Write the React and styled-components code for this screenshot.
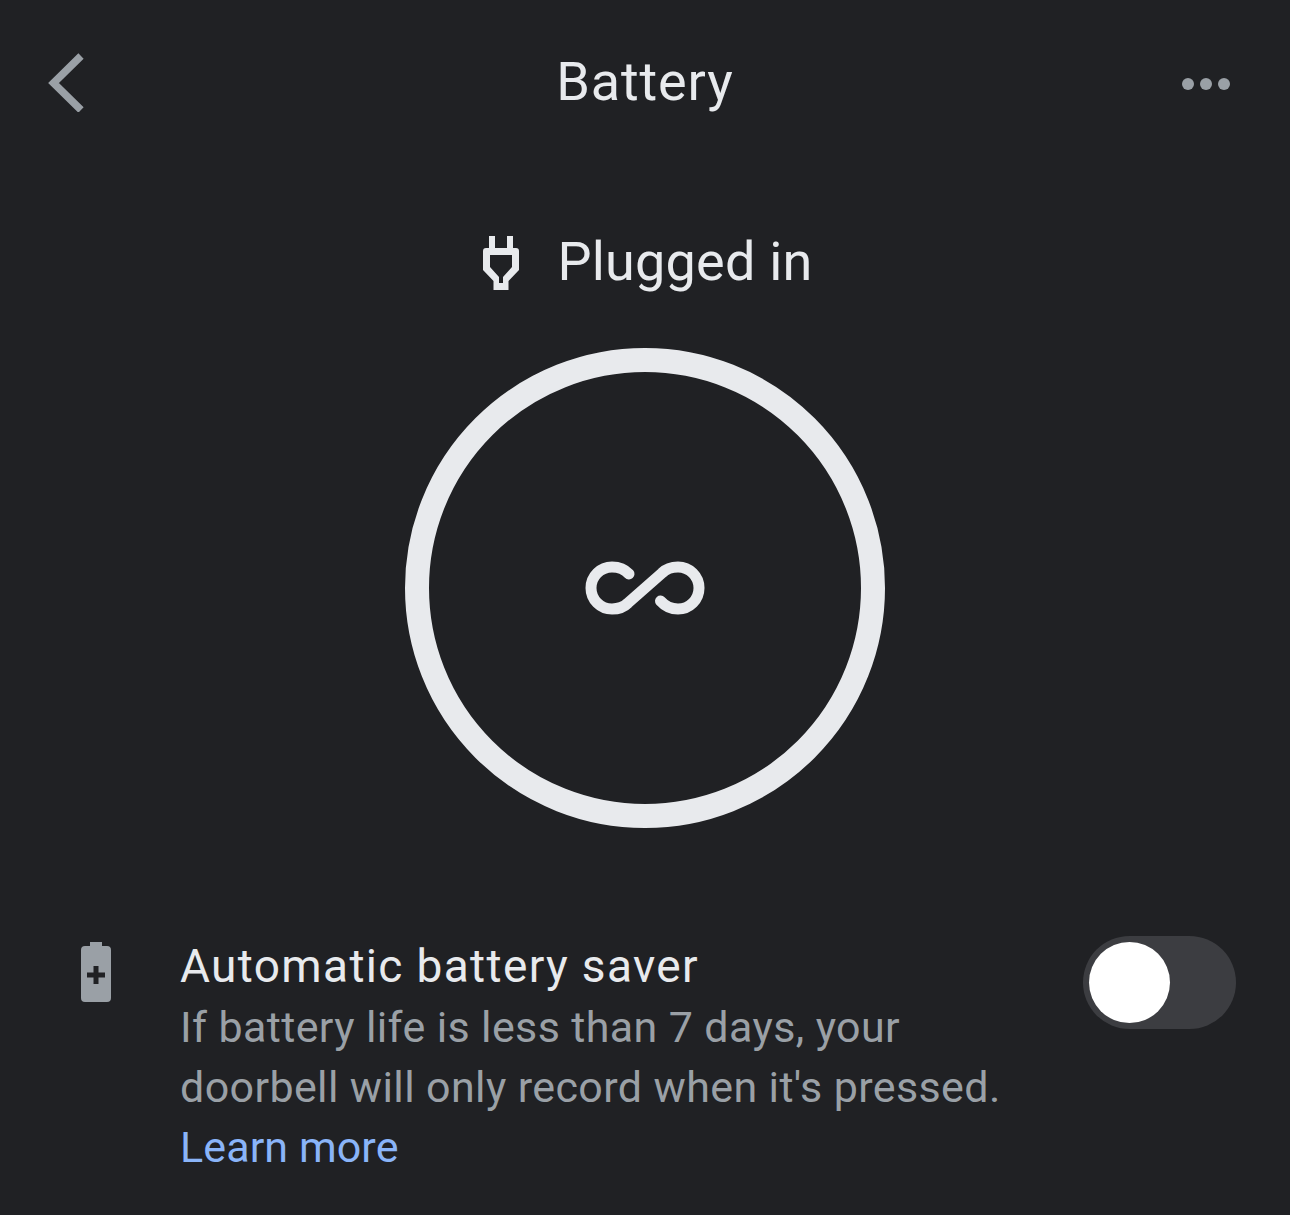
import React from 'react'
import styled, { createGlobalStyle } from 'styled-components'

const Global = createGlobalStyle`
  html, body { margin: 0; padding: 0; background: #202124; }
`
const Page = styled.div`
  width: 1290px;
  height: 1215px;
  overflow: hidden;
  background: #202124;
  color: #e8eaed;
  font-family: Roboto, "Open Sans", sans-serif;
  display: flex;
  flex-direction: column;
`
const Header = styled.header`
  height: 164px;
  display: grid;
  grid-template-columns: 1fr auto 1fr;
  align-items: center;
  padding: 0 48px;
`
const BackButton = styled.div`
  display: flex;
  justify-content: flex-start;
`
const MoreButton = styled.div`
  display: flex;
  justify-content: flex-end;
  gap: 6px;
  margin: 4px 12px 0 0;
`
const Dot = styled.span`
  width: 12px;
  height: 12px;
  border-radius: 50%;
  background: #9aa0a6;
`
const Title = styled.h1`
  margin: 0;
  font-size: 54px;
  font-weight: 400;
  line-height: 64px;
  letter-spacing: 0.85px;
`
const Status = styled.div`
  margin-top: 44px;
  height: 108px;
  padding-left: 6px;
  display: flex;
  align-items: flex-start;
  justify-content: center;
  gap: 38px;
`
const StatusText = styled.span`
  font-size: 54px;
  line-height: 64px;
  margin-top: 22px;
  letter-spacing: 0.2px;
`
const PlugIcon = styled.svg`
  margin-top: 28px;
`
const Ring = styled.div`
  box-sizing: border-box;
  width: 480px;
  height: 480px;
  margin: 32px auto 0;
  border: 24px solid #e8eaed;
  border-radius: 50%;
  display: flex;
  align-items: center;
  justify-content: center;
`
const SaverRow = styled.section`
  margin-top: 108px;
  padding: 0 54px 0 81px;
  display: flex;
  align-items: flex-start;
`
const BatteryIcon = styled.svg`
  flex: none;
  margin-top: 6px;
`
const SaverText = styled.div`
  flex: 1;
  margin-left: 69px;
`
const SaverTitle = styled.div`
  font-size: 46px;
  line-height: 60px;
  letter-spacing: 1.35px;
`
const SaverBody = styled.div`
  font-size: 43px;
  line-height: 60px;
  letter-spacing: 0.38px;
  color: #9aa0a6;
  margin-top: 1px;
`
const LearnMore = styled.a`
  color: #8ab4f8;
  display: block;
  letter-spacing: 0.1px;
`
const Toggle = styled.div`
  box-sizing: border-box;
  flex: none;
  width: 153px;
  height: 93px;
  padding: 6px;
  border-radius: 47px;
  background: #3c3d41;
`
const Knob = styled.div`
  width: 81px;
  height: 81px;
  border-radius: 50%;
  background: #fff;
`

export default function App() {
  return (
    <Page>
      <Global />
      <Header>
        <BackButton>
          <svg width="36" height="60" viewBox="0 0 36 60">
            <path d="M33 4 L5.500 31 L33 58" fill="none" stroke="#9aa0a6" strokeWidth="7.5" />
          </svg>
        </BackButton>
        <Title>Battery</Title>
        <MoreButton>
          <Dot />
          <Dot />
          <Dot />
        </MoreButton>
      </Header>
      <Status>
        <PlugIcon width="36" height="54" viewBox="0 0 36 54">
          <path
            fill="#e8eaed"
            fillRule="evenodd"
            d="M6 0H12V12H24V0H30V12H33A3 3 0 0 1 36 15V34L25.5 45V54H10.5V45L0 34V15A3 3 0 0 1 3 12H6ZM7 19V31L16 41V47H20V41L29 31V19Z"
          />
        </PlugIcon>
        <StatusText>Plugged in</StatusText>
      </Status>
      <Ring>
        <svg width="120" height="54" viewBox="0 0 120 54">
          <path
            fill="none"
            stroke="#e8eaed"
            strokeWidth="11"
            strokeLinecap="round"
            d="M44 13C40 8.500 35 6 27 6A21 21 0 0 0 27 48C34 48 39.500 45.500 43 42L77 12C81 8 86 6 93 6A21 21 0 0 1 93 48C86 48 80 45 75.500 40"
          />
        </svg>
      </Ring>
      <SaverRow>
        <BatteryIcon width="30" height="60" viewBox="0 0 30 60">
          <path
            fill="#9aa0a6"
            fillRule="evenodd"
            d="M9 0H21V4H26A4 4 0 0 1 30 8V56A4 4 0 0 1 26 60H4A4 4 0 0 1 0 56V8A4 4 0 0 1 4 4H9ZM12.500 24V30.500H6V35.500H12.500V42H17.500V35.500H24V30.500H17.500V24Z"
          />
        </BatteryIcon>
        <SaverText>
          <SaverTitle>Automatic battery saver</SaverTitle>
          <SaverBody>
            If battery life is less than 7 days, your
            <br />
            doorbell will only record when it's pressed.
            <LearnMore>Learn more</LearnMore>
          </SaverBody>
        </SaverText>
        <Toggle>
          <Knob />
        </Toggle>
      </SaverRow>
    </Page>
  )
}
